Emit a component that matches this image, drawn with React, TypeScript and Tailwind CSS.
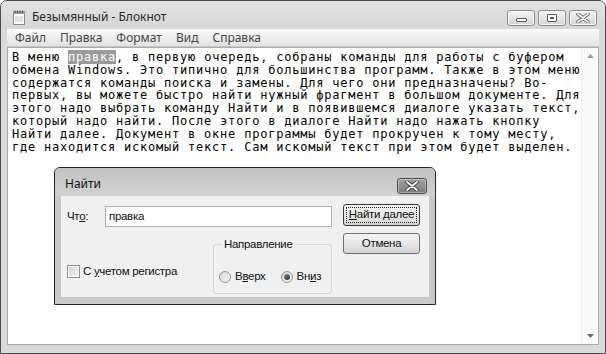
import React from "react";

const lines = [
  "обмена Windows. Это типично для большинства программ. Также в этом меню",
  "содержатся команды поиска и замены. Для чего они предназначены? Во-",
  "первых, вы можете быстро найти нужный фрагмент в большом документе. Для",
  "этого надо выбрать команду Найти и в появившемся диалоге указать текст,",
  "который надо найти. После этого в диалоге Найти надо нажать кнопку",
  "Найти далее. Документ в окне программы будет прокручен к тому месту,",
  "где находится искомый текст. Сам искомый текст при этом будет выделен.",
];

function NotepadIcon() {
  return (
    <svg width="14" height="15" viewBox="0 0 14 15">
      <rect x="1.5" y="2.5" width="11" height="12" fill="#fbfbfb" stroke="#8a8a8a" />
      <rect x="1" y="1" width="12" height="3" fill="#9a9a9a" />
      <line x1="3" y1="0.5" x2="3" y2="3" stroke="#555" />
      <line x1="5.5" y1="0.5" x2="5.5" y2="3" stroke="#555" />
      <line x1="8" y1="0.5" x2="8" y2="3" stroke="#555" />
      <line x1="10.5" y1="0.5" x2="10.5" y2="3" stroke="#555" />
      <line x1="3" y1="7" x2="11" y2="7" stroke="#c4c4c4" />
      <line x1="3" y1="9" x2="11" y2="9" stroke="#c4c4c4" />
      <line x1="3" y1="11" x2="11" y2="11" stroke="#c4c4c4" />
    </svg>
  );
}

function WinButton({ kind }: { kind: "min" | "max" | "close" }) {
  return (
    <div className="w-[28px] h-[16px] rounded-[3px] border border-[#8c8c8c] bg-gradient-to-b from-[#f4f4f4] via-[#e6e6e6] to-[#d2d2d2] flex items-center justify-center shadow-[inset_0_0_0_1px_rgba(255,255,255,0.7)]">
      {kind === "min" && (
        <div className="w-[11px] h-[4px] mt-[3px] border border-[#5a5a5a] bg-white rounded-[1px]" />
      )}
      {kind === "max" && (
        <div className="w-[10px] h-[8px] border border-[#5a5a5a] bg-white rounded-[1px] flex items-center justify-center">
          <div className="w-[4px] h-[2px] bg-[#5a5a5a]" />
        </div>
      )}
      {kind === "close" && (
        <svg width="14" height="10" viewBox="0 0 14 10">
          <path d="M2 1 L12 9 M12 1 L2 9" stroke="#6a6a6a" strokeWidth="3.6" strokeLinecap="round" />
          <path d="M2 1 L12 9 M12 1 L2 9" stroke="#f4f4f4" strokeWidth="1.8" strokeLinecap="round" />
        </svg>
      )}
    </div>
  );
}

function Radio({ checked }: { checked?: boolean }) {
  return (
    <div className="w-[12px] h-[12px] rounded-full border border-[#8e8f8f] bg-gradient-to-br from-[#d8d8d8] to-[#f6f6f6] flex items-center justify-center">
      {checked && (
        <div className="w-[6px] h-[6px] rounded-full bg-gradient-to-br from-[#8a8a8a] to-[#2e2e2e]" />
      )}
    </div>
  );
}

export default function App() {
  return (
    <div className="relative w-[606px] h-[354px] overflow-hidden bg-white" style={{ fontFamily: '"Noto Sans", sans-serif' }}>
      <div className="w-[606px] h-[354px] border border-[#4d4d4d] rounded-t-[7px] bg-[#d9d9d9] flex flex-col">
        {/* title bar */}
        <div className="h-[28px] flex items-center pl-[11px] pr-[8px] pt-[4px] bg-gradient-to-b from-[#e2e2e2] to-[#d6d6d6] rounded-t-[6px]">
          <NotepadIcon />
          <span className="ml-[6px] text-[12px] text-[#2a2a2a] leading-none">Безымянный - Блокнот</span>
          <div className="ml-auto flex gap-[3px] mt-[2px]">
            <WinButton kind="min" />
            <WinButton kind="max" />
            <WinButton kind="close" />
          </div>
        </div>
        {/* menu bar */}
        <div className="mx-[6px] h-[18px] flex items-center pl-[8px] gap-[14px] text-[12px] text-[#444] bg-gradient-to-b from-[#fbfbfb] via-[#eeeeee] to-[#e2e2e2] border-b border-[#c8c8c8]">
          <span>Файл</span>
          <span>Правка</span>
          <span>Формат</span>
          <span>Вид</span>
          <span>Справка</span>
        </div>
        {/* text area */}
        <div className="mx-[6px] flex-1 bg-white border border-[#a9a9a9] flex">
          <div
            className="flex-1 pl-[4px] pt-[3px] text-[12px] leading-[12.8px] tracking-[0.78px] text-black whitespace-pre"
            style={{ fontFamily: '"DejaVu Sans Mono", monospace' }}
          >
            <div>
              В меню <span className="bg-[#9b9b9b] text-white">правка</span>, в первую очередь, собраны команды для работы с буфером
            </div>
            {lines.map((l, i) => (
              <div key={i}>{l}</div>
            ))}
          </div>
          <div className="w-[17px] bg-[#f9f9f9] border-l border-[#ececec] flex flex-col items-center justify-between py-[6px]">
            <svg width="7" height="4" viewBox="0 0 7 4">
              <path d="M0 4 L3.5 0 L7 4 Z" fill="#9a9a9a" />
            </svg>
            <svg width="7" height="4" viewBox="0 0 7 4">
              <path d="M0 0 L3.5 4 L7 0 Z" fill="#6a6a6a" />
            </svg>
          </div>
        </div>
        <div className="h-[8px]" />
      </div>

      {/* Find dialog */}
      <div
        className="absolute left-[54px] top-[167px] w-[382px] h-[138px] border border-[#262626] rounded-t-[6px] bg-[#c9c9c9] flex flex-col"
        style={{ fontFamily: '"Liberation Sans", sans-serif' }}
      >
        <div className="h-[28px] flex items-center pl-[10px] pr-[8px] pt-[3px] rounded-t-[5px] bg-gradient-to-b from-[#c2c2c2] to-[#d2d2d2]">
          <span className="text-[12px] text-[#111] leading-none" style={{ fontFamily: '"Noto Sans", sans-serif' }}>
            Найти
          </span>
          <div className="ml-auto mt-[4px] w-[30px] h-[16px] rounded-[3px] border border-[#4e4e4e] bg-gradient-to-b from-[#a4a4a4] to-[#7a7a7a] flex items-center justify-center shadow-[inset_0_0_0_1px_rgba(255,255,255,0.35)]">
            <svg width="14" height="10" viewBox="0 0 14 10">
              <path d="M2 1 L12 9 M12 1 L2 9" stroke="#3a3a3a" strokeWidth="3.6" strokeLinecap="round" />
              <path d="M2 1 L12 9 M12 1 L2 9" stroke="#ffffff" strokeWidth="1.8" strokeLinecap="round" />
            </svg>
          </div>
        </div>
        <div className="mx-[6px] h-[101px] bg-[#f0f0f0] flex pl-[6px] pt-[8px] text-[11.5px] tracking-[-0.3px] text-[#111] whitespace-nowrap">
          <div className="w-[265px] flex flex-col">
            <div className="mt-[2px] h-[21px] flex items-center">
              <span className="w-[38px]">
                Чт<span className="underline">о</span>:
              </span>
              <div className="w-[227px] h-[21px] border border-[#abadb3] bg-white pl-[3px] flex items-center">
                правка
              </div>
            </div>
            <div className="mt-[11px] flex justify-between items-end">
              <div className="flex items-center mb-[14px]">
                <div className="w-[13px] h-[13px] border border-[#8e8f8f] bg-gradient-to-br from-[#d2d2d2] to-[#f4f4f4] shadow-[inset_0_0_0_1px_#fff]" />
                <span className="ml-[3px]">
                  С <span className="underline">у</span>четом регистра
                </span>
              </div>
              <fieldset className="w-[119px] h-[56px] border border-[#d0d6da] rounded-[3px] px-[5px]">
                <legend className="ml-[3px] px-[2px] leading-[12px]">Направление</legend>
                <div className="flex items-center mt-[18px]">
                  <Radio />
                  <span className="ml-[4px]">
                    В<span className="underline">в</span>ерх
                  </span>
                  <div className="ml-[15px]">
                    <Radio checked />
                  </div>
                  <span className="ml-[4px]">
                    Вн<span className="underline">и</span>з
                  </span>
                </div>
              </fieldset>
            </div>
          </div>
          <div className="ml-[11px] flex flex-col">
            <div className="w-[77px] h-[22px] rounded-[3px] border border-[#3c3c3c] bg-gradient-to-b from-[#f4f4f4] via-[#e8e8e8] to-[#d4d4d4] p-[2px]">
              <div className="w-full h-full border border-dotted border-[#222] flex items-center justify-center">
                <span>
                  <span className="underline">Н</span>айти далее
                </span>
              </div>
            </div>
            <div className="mt-[7px] w-[77px] h-[21px] rounded-[3px] border border-[#707070] bg-gradient-to-b from-[#f4f4f4] via-[#e8e8e8] to-[#d4d4d4] flex items-center justify-center">
              Отмена
            </div>
          </div>
        </div>
        <div className="flex-1" />
      </div>
    </div>
  );
}
